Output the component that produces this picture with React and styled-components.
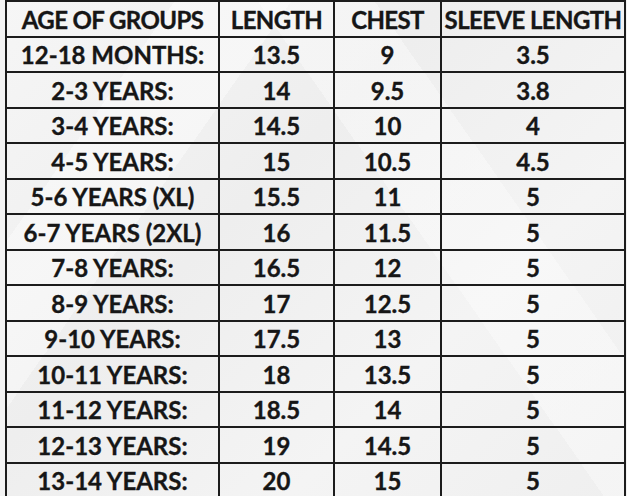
import React from "react";
import styled, { createGlobalStyle } from "styled-components";

const Global = createGlobalStyle`
  html, body { margin: 0; padding: 0; background: #f3f3f3; }
  body { font-family: "Lato", "Open Sans", sans-serif; }
`;

const Page = styled.div`
  padding-left: 5px;
  width: 627px;
  height: 496px;
  overflow: hidden;
  box-sizing: border-box;
`;

const Grid = styled.div`
  display: grid;
  grid-template-columns: 211px 113px 105px 182px;
  grid-auto-rows: 33.5px;
  gap: 2px;
  padding: 2px;
  width: max-content;
  background: #1c1c1c;
`;

const Cell = styled.div`
  display: flex;
  align-items: center;
  justify-content: center;
  padding-top: 1px;
  font-family: "Lato", "Open Sans", sans-serif;
  font-weight: 700;
  font-size: 24px;
  letter-spacing: ${(p) => (p.$head ? "-0.6px" : "0")};
  -webkit-text-stroke: 0.35px #161616;
  color: #161616;
  white-space: nowrap;
  background:
    linear-gradient(125deg, transparent 0 18%, rgba(255,255,255,0.4) 18% 30%, transparent 30% 100%) fixed,
    linear-gradient(55deg, transparent 0 62%, rgba(255,255,255,0.35) 62% 74%, transparent 74% 100%) fixed,
    linear-gradient(135deg, #f6f6f6 0%, #eeeeee 40%, #f4f4f4 70%, #efefef 100%) fixed;
`;

const head = ["AGE OF GROUPS", "LENGTH", "CHEST", "SLEEVE LENGTH"];
const rows = [
  ["12-18 MONTHS:", "13.5", "9", "3.5"],
  ["2-3 YEARS:", "14", "9.5", "3.8"],
  ["3-4 YEARS:", "14.5", "10", "4"],
  ["4-5 YEARS:", "15", "10.5", "4.5"],
  ["5-6 YEARS (XL)", "15.5", "11", "5"],
  ["6-7 YEARS (2XL)", "16", "11.5", "5"],
  ["7-8 YEARS:", "16.5", "12", "5"],
  ["8-9 YEARS:", "17", "12.5", "5"],
  ["9-10 YEARS:", "17.5", "13", "5"],
  ["10-11 YEARS:", "18", "13.5", "5"],
  ["11-12 YEARS:", "18.5", "14", "5"],
  ["12-13 YEARS:", "19", "14.5", "5"],
  ["13-14 YEARS:", "20", "15", "5"],
];

export default function App() {
  return (
    <Page>
      <Global />
      <Grid>
        {head.map((h) => (
          <Cell key={h} $head>{h}</Cell>
        ))}
        {rows.map((r, i) =>
          r.map((c, j) => <Cell key={i + "-" + j}>{c}</Cell>)
        )}
      </Grid>
    </Page>
  );
}
